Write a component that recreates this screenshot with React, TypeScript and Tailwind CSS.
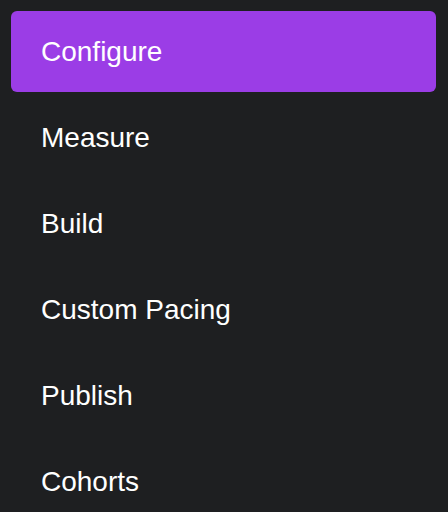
import React from 'react';

const items = ['Configure', 'Measure', 'Build', 'Custom Pacing', 'Publish', 'Cohorts'];

export default function App() {
  const active = 'Configure';
  return (
    <div className="min-h-screen w-[448px] h-[512px] overflow-hidden bg-[#1e1f21] pt-[11px] pl-[11px] pr-[12px] font-['Liberation_Sans',Arial,sans-serif]">
      <nav className="flex flex-col gap-[5px]">
        {items.map(label => (
          <div
            key={label}
            className={`h-[81px] flex items-center pl-[30px] rounded-[6px] text-[28px] text-white ${
              label === active ? 'bg-[#9b3de6]' : ''
            }`}
          >
            {label}
          </div>
        ))}
      </nav>
    </div>
  );
}
